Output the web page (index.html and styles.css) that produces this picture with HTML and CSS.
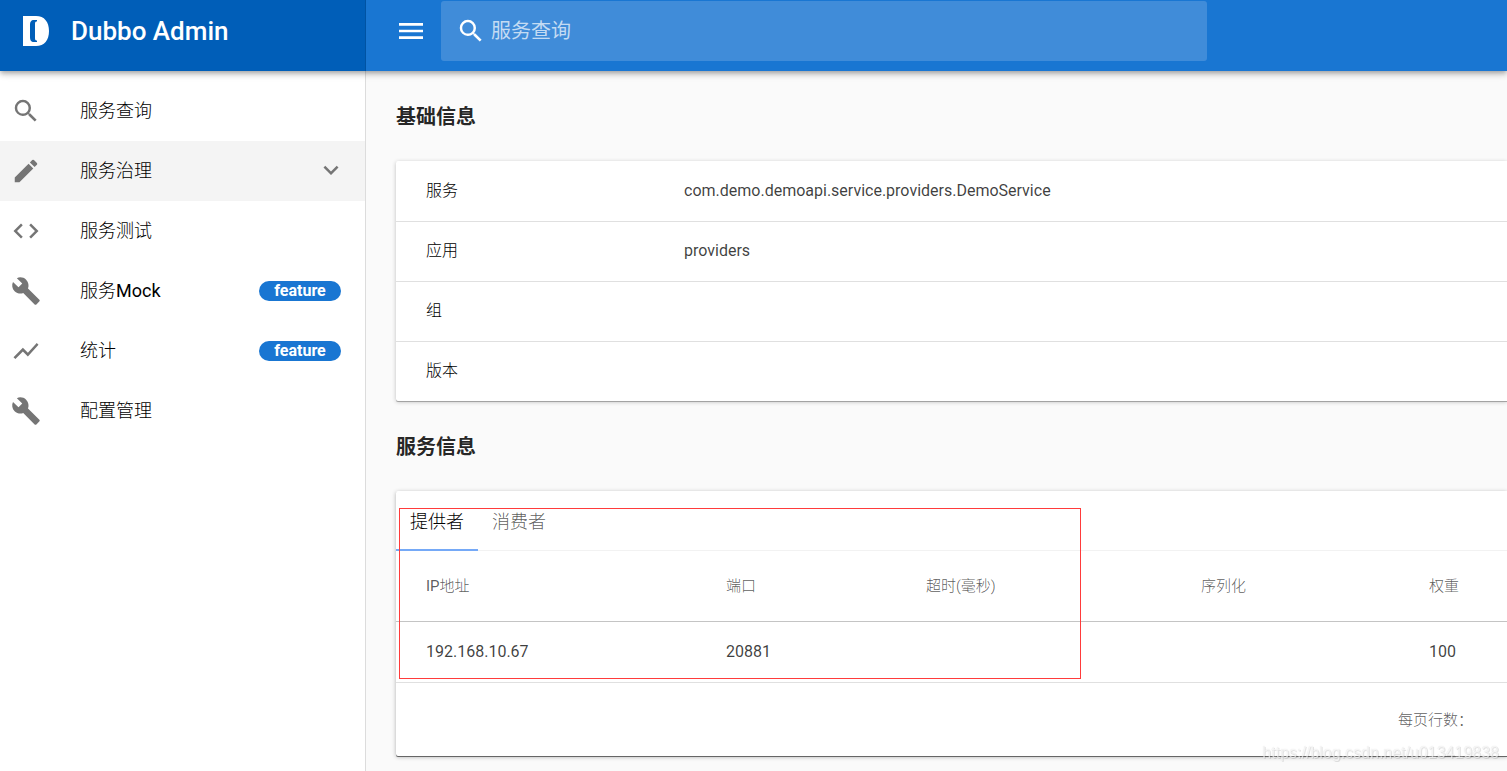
FILE: index.html
```html
<!DOCTYPE html>
<html lang="zh-CN">
<head>
<meta charset="utf-8">
<meta name="viewport" content="width=device-width, initial-scale=1">
<title>Dubbo Admin</title>
<link rel="stylesheet" href="styles.css">
</head>
<body>
<header class="topbar">
  <div class="brand">
    <svg class="logo" viewBox="0 0 26 30" aria-hidden="true"><path fill="#fff" fill-rule="evenodd" d="M0 0H13C21.500 0 26 6 26 15S21.500 30 13 30H0ZM14 4H11C8 4 7 6 7 9V21C7 24 8 26 11 26H14V24.500C12.500 24.500 12 24 12 22V8C12 6 12.500 5.500 14 5.500Z"/></svg>
    <h1 class="brand-name">Dubbo Admin</h1>
  </div>
  <div class="toolbar">
    <button class="menu-button" type="button" aria-label="菜单"><svg class="icon-menu" viewBox="0 0 24 24"><path d="M3 18h18v-2H3v2zm0-5h18v-2H3v2zm0-7v2h18V6H3z"/></svg></button>
    <label class="search">
      <svg class="icon" viewBox="0 0 24 24" aria-hidden="true"><path d="M15.500 14h-.79l-.28-.27A6.471 6.471 0 0 0 16 9.500 6.500 6.500 0 1 0 9.500 16c1.610 0 3.090-.59 4.230-1.570l.27.28v.79l5 4.990L20.490 19l-4.990-5zm-6 0C7.010 14 5 11.990 5 9.500S7.010 5 9.500 5 14 7.010 14 9.500 11.990 14 9.500 14z"/></svg>
      <input class="search-input" type="text" placeholder="服务查询" aria-label="服务查询">
    </label>
  </div>
</header>
<div class="layout">
  <nav class="sidebar">
    <a class="nav-item" href="#"><svg class="icon" viewBox="0 0 24 24" aria-hidden="true"><path d="M15.500 14h-.79l-.28-.27A6.471 6.471 0 0 0 16 9.500 6.500 6.500 0 1 0 9.500 16c1.610 0 3.090-.59 4.230-1.570l.27.28v.79l5 4.990L20.490 19l-4.990-5zm-6 0C7.010 14 5 11.990 5 9.500S7.010 5 9.500 5 14 7.010 14 9.500 11.990 14 9.500 14z"/></svg><span class="nav-label">服务查询</span></a>
    <button class="nav-item nav-active" type="button"><svg class="icon" viewBox="0 0 24 24" aria-hidden="true"><path d="M3 17.250V21h3.750L17.810 9.940l-3.750-3.750L3 17.250zM20.710 7.040a.996.996 0 0 0 0-1.410l-2.340-2.340a.996.996 0 0 0-1.410 0l-1.830 1.830 3.750 3.750 1.830-1.830z"/></svg><span class="nav-label">服务治理</span><svg class="icon chevron" viewBox="0 0 24 24" aria-hidden="true"><path d="M7.410 7.840L12 12.420l4.590-4.580L18 9.250l-6 6-6-6z"/></svg></button>
    <a class="nav-item" href="#"><svg class="icon" viewBox="0 0 24 24" aria-hidden="true"><path d="M9.400 16.600L4.800 12l4.600-4.600L8 6l-6 6 6 6 1.400-1.400zm5.200 0l4.600-4.600-4.600-4.600L16 6l6 6-6 6-1.400-1.400z"/></svg><span class="nav-label">服务测试</span></a>
    <a class="nav-item" href="#"><svg class="icon" viewBox="0 0 24 24" aria-hidden="true"><path d="M22.700 19l-9.100-9.100c.9-2.300.4-5-1.500-6.900-2-2-5-2.400-7.400-1.300L9 6 6 9 1.600 4.700C.4 7.100.9 10.100 2.900 12.100c1.900 1.900 4.600 2.400 6.900 1.500l9.100 9.100c.4.400 1 .4 1.400 0l2.300-2.300c.5-.4.5-1.100.1-1.400z"/></svg><span class="nav-label">服务<span class="latin">Mock</span></span><span class="badge">feature</span></a>
    <a class="nav-item" href="#"><svg class="icon" viewBox="0 0 24 24" aria-hidden="true"><path d="M3.500 18.490l6-6.010 4 4L22 6.920l-1.410-1.410-7.090 7.970-4-4L2 16.990z"/></svg><span class="nav-label">统计</span><span class="badge">feature</span></a>
    <a class="nav-item" href="#"><svg class="icon" viewBox="0 0 24 24" aria-hidden="true"><path d="M22.700 19l-9.100-9.100c.9-2.300.4-5-1.500-6.900-2-2-5-2.400-7.400-1.300L9 6 6 9 1.600 4.700C.4 7.100.9 10.100 2.900 12.100c1.900 1.900 4.600 2.400 6.900 1.500l9.100 9.100c.4.400 1 .4 1.400 0l2.300-2.300c.5-.4.5-1.100.1-1.400z"/></svg><span class="nav-label">配置管理</span></a>
  </nav>
  <main class="content">
    <h2 class="section-title">基础信息</h2>
    <section class="card">
      <table class="info-table">
        <colgroup><col class="col-key"><col></colgroup>
        <tbody>
          <tr><th scope="row">服务</th><td>com.demo.demoapi.service.providers.DemoService</td></tr>
          <tr><th scope="row">应用</th><td>providers</td></tr>
          <tr><th scope="row">组</th><td></td></tr>
          <tr><th scope="row">版本</th><td></td></tr>
        </tbody>
      </table>
    </section>
    <h2 class="section-title">服务信息</h2>
    <section class="card card-service">
      <div class="tabs" role="tablist">
        <button class="tab tab-active" type="button" role="tab" aria-selected="true">提供者</button>
        <button class="tab" type="button" role="tab" aria-selected="false">消费者</button>
      </div>
      <table class="data-table">
        <colgroup><col class="col-ip"><col class="col-port"><col class="col-timeout"><col class="col-serial"><col></colgroup>
        <thead>
          <tr><th scope="col"><span class="latin">IP</span>地址</th><th scope="col">端口</th><th scope="col">超时(毫秒)</th><th scope="col">序列化</th><th scope="col">权重</th></tr>
        </thead>
        <tbody>
          <tr><td>192.168.10.67</td><td>20881</td><td></td><td></td><td>100</td></tr>
        </tbody>
      </table>
      <div class="table-footer">每页行数：</div>
      <div class="highlight"></div>
    </section>
  </main>
</div>
<div class="watermark">https://blog.csdn.net/u013419838</div>
</body>
</html>
```
FILE: styles.css
```css
*, *::before, *::after { box-sizing: border-box; }

body {
  margin: 0;
  min-height: 100vh;
  display: flex;
  flex-direction: column;
  overflow: hidden;
  background: #fafafa;
  color: rgba(0, 0, 0, .87);
  font: 400 16px/24px Roboto, "Noto Sans CJK SC", sans-serif;
}

button, input { font: inherit; color: inherit; border: 0; background: none; }

.topbar {
  position: relative;
  z-index: 1;
  display: grid;
  grid-template-columns: 366px 1fr;
  background: #1976d2;
  color: #fff;
  box-shadow: 0 2px 4px -1px rgba(0, 0, 0, .2), 0 4px 5px rgba(0, 0, 0, .14), 0 1px 10px rgba(0, 0, 0, .12);
}

.brand {
  display: flex;
  align-items: center;
  gap: 22px;
  padding: 1px 23px 10px;
  background: #005eb8;
  border-right: 1px solid #0053a3;
}
.logo { width: 26px; height: 30px; }
.brand-name { margin: 0; font-size: 26px; line-height: 32px; font-weight: 500; }

.toolbar { display: flex; align-items: center; gap: 14px; padding: 1px 30px 10px 29px; }
.menu-button { display: flex; padding: 0; }
.icon-menu { width: 32px; height: 32px; fill: #fff; }
.icon { flex: none; width: 30px; height: 30px; fill: #757575; }

.search {
  flex: 0 1 766px;
  display: flex;
  align-items: center;
  gap: 5px;
  height: 60px;
  padding: 0 15px;
  border-radius: 3px;
  background: #408cd9;
}
.search .icon { fill: #fff; }
.search-input { flex: 1; min-width: 0; padding: 0; outline: 0; font-size: 20px; line-height: 30px; }
.search-input::placeholder { color: rgba(255, 255, 255, .7); opacity: 1; }

.layout { flex: 1; display: grid; grid-template-columns: 366px 1fr; }

.sidebar { padding-top: 10px; background: #fff; border-right: 1px solid #dcdcdc; }
.nav-item {
  display: flex;
  align-items: center;
  width: 100%;
  height: 60px;
  padding: 0 24px 0 11px;
  color: #000;
  text-align: left;
  text-decoration: none;
  font-size: 18px;
  font-weight: 300;
}
.nav-active { padding-right: 19px; background: #f4f4f4; }
.nav-label { flex: 1; padding-left: 39px; }
.latin { font-weight: 400; }
.badge {
  width: 82px;
  border-radius: 10px;
  background: #1976d2;
  color: #fff;
  font-size: 16px;
  line-height: 20px;
  font-weight: 700;
  text-align: center;
}

.content { min-width: 0; padding-left: 30px; }
.section-title { margin: 0; padding: 31px 0 29px; font-size: 20px; line-height: 30px; font-weight: 700; }

.card {
  position: relative;
  background: #fff;
  border-radius: 2px 0 0 2px;
  box-shadow: 0 1px 0 #a3a3a3, 0 1px 4px rgba(0, 0, 0, .24);
}
.card-service { box-shadow: 0 1px 0 #666, 0 1px 4px rgba(0, 0, 0, .3); }

table { width: 100%; border-collapse: separate; border-spacing: 0; table-layout: fixed; }
th, td { height: 60px; padding: 0 30px; text-align: left; white-space: nowrap; font-weight: 400; }
td { color: rgba(0, 0, 0, .76); }

.info-table th { font-weight: 300; color: #000; }
.info-table tr + tr > * { padding-bottom: 2px; border-top: 1px solid #e0e0e0; }
.col-key { width: 258px; }

.tabs { display: flex; border-bottom: 1px solid #f2f2f2; }
.tab { height: 59px; padding: 2px 14px 0; font-size: 18px; font-weight: 300; color: rgba(0, 0, 0, .65); }
.tab-active { color: #000; margin-bottom: -1px; height: 60px; padding-top: 4px; border-bottom: 2px solid #75a9f7; }

.data-table th { height: 71px; font-size: 15px; font-weight: 300; color: rgba(0, 0, 0, .65); border-bottom: 1px solid #c4c4c4; }
.col-ip { width: 300px; }
.col-port { width: 200px; }
.col-timeout { width: 275px; }
.col-serial { width: 228px; }

.table-footer {
  padding: 25px 34px 24px;
  border-top: 1px solid #e0e0e0;
  font-size: 15px;
  font-weight: 300;
  color: rgba(0, 0, 0, .65);
  text-align: right;
}

.highlight {
  position: absolute;
  left: 3px;
  top: 17px;
  width: 682px;
  height: 171px;
  border: 1px solid #ff3b3b;
  pointer-events: none;
}

.watermark {
  position: fixed;
  right: 8px;
  bottom: 6px;
  color: rgba(255, 255, 255, .7);
  text-shadow: 0 0 1px rgba(0, 0, 0, .15), 1px 1px 0 rgba(0, 0, 0, .1);
  font-family: "Liberation Sans", sans-serif;
  font-size: 16px;
}
```
